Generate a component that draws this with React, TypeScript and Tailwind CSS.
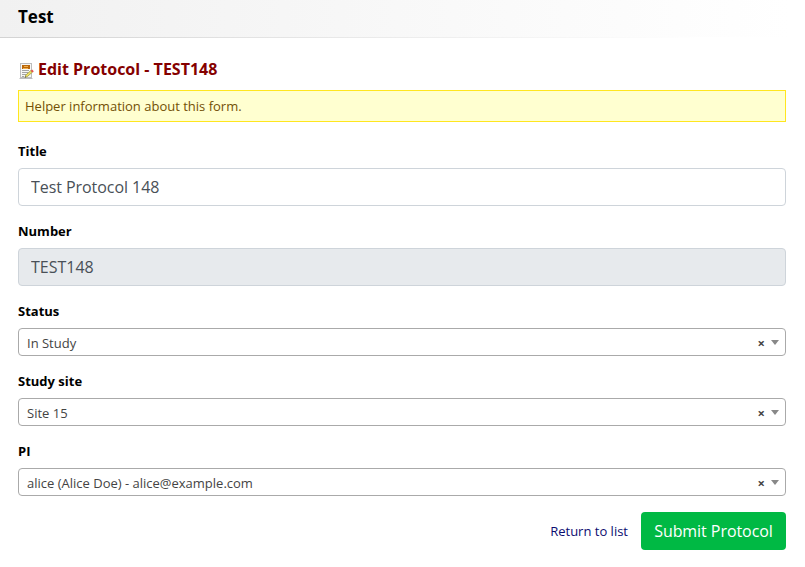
import type { ReactNode } from 'react';

function FormIcon() {
  return (
    <svg width="16" height="16" viewBox="0 0 16 16" className="mb-0.5 shrink-0">
      <rect x="2.5" y="0.5" width="11" height="14" fill="#f7f7f5" stroke="#bcbcbc" />
      <path d="M1.5 15.5h13" stroke="#bdbdbd" />
      <rect x="4" y="2" width="8" height="4" fill="#b9660a" />
      <path d="M6 3.5h4M5 5.5h5" stroke="#f0ae48" />
      <path d="M4 7.5h7M4 9.5h6M4 11.5h4M4 13.5h2" stroke="#a4a4a4" />
      <path d="M7 14.3l.8-2.3 5-4.4 1.6 1.6-5.1 4.4z" fill="#efe162" stroke="#918d3c" strokeWidth=".7" />
      <path d="M12.8 7.7l1.3-1.2 1.7 1.7-1.3 1.2z" fill="#e8504c" />
      <path d="M6.8 14.6l.4-1.3.9.9z" fill="#444" />
    </svg>
  );
}

function Field({ label, children }: { label: string; children: ReactNode }) {
  return (
    <div className="flex flex-col gap-[7px]">
      <label className="h-5 text-[13px] leading-5 font-bold text-black">{label}</label>
      {children}
    </div>
  );
}

function Select({ value }: { value: string }) {
  return (
    <div className="flex h-7 items-center rounded border border-[#aaa] bg-white pr-[6px] pl-2 text-[13px] text-[#444]">
      <span className="flex-1 pt-0.5 leading-[26px]">{value}</span>
      <span className="mr-[6px] pt-0.5 font-bold leading-[26px]">×</span>
      <span className="border-x-4 border-t-5 border-x-transparent border-t-[#888]" />
    </div>
  );
}

export default function App() {
  return (
    <div className="min-h-[567px] bg-white font-['Open_Sans',sans-serif] text-[13px]">
      <header className="h-[38px] bg-linear-to-r from-[#d3d3d3] to-white to-[700px] pb-px">
        <div className="h-[37px] bg-linear-to-r from-[#f1f1f1] to-white to-[790px] pl-[18px]">
          <h1 className="text-[17px] leading-[33px] font-bold text-black">Test</h1>
        </div>
      </header>
      <main className="pr-[19px] pl-[18px]">
        <h2 className="flex h-[52px] items-end pb-[9px] text-[16px] leading-6 font-bold text-[#850000]">
          <FormIcon />
          <span className="ml-1">Edit Protocol - TEST148</span>
        </h2>
        <div className="h-8 border border-[#ffe61f] bg-[#ffffd0] pl-[6px] leading-[31px] text-[#735005]">
          Helper information about this form.
        </div>
        <form className="mt-[19px] flex flex-col">
          <div className="flex flex-col gap-[15px]">
            <Field label="Title">
              <input
                className="h-[38px] rounded border border-[#ced4da] bg-white px-3 text-base tracking-[-0.06px] text-[#495057]"
                defaultValue="Test Protocol 148"
              />
            </Field>
            <Field label="Number">
              <input
                className="h-[38px] rounded border border-[#ced4da] bg-[#e7eaed] px-3 text-base text-[#495057]"
                defaultValue="TEST148"
                readOnly
              />
            </Field>
            <Field label="Status">
              <Select value="In Study" />
            </Field>
            <Field label="Study site">
              <Select value="Site 15" />
            </Field>
            <Field label="PI">
              <Select value="alice (Alice Doe) - alice@example.com" />
            </Field>
          </div>
          <div className="mt-4 flex items-center justify-end gap-[13px]">
            <a className="pt-0.5 text-[#0c0c70]">Return to list</a>
            <button
              type="button"
              className="h-[38px] w-[145px] rounded bg-[#00b944] text-base tracking-[-0.06px] whitespace-nowrap text-white"
            >
              Submit Protocol
            </button>
          </div>
        </form>
      </main>
    </div>
  );
}
